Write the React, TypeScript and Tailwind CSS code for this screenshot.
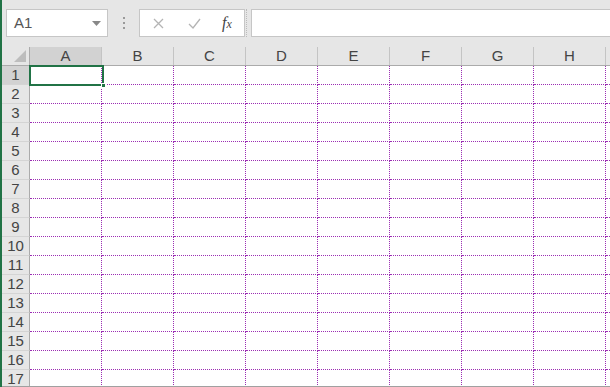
const cols = ["A", "B", "C", "D", "E", "F", "G", "H"];
const rows = Array.from({ length: 18 }, (_, i) => i + 1);

export default function App() {
  return (
    <div className="h-[387px] w-[610px] overflow-hidden flex flex-col bg-white border-l-2 border-[#217346] font-['Liberation_Sans',sans-serif]">
      {/* formula bar */}
      <div className="h-[47px] shrink-0 bg-[#e6e6e6] flex items-start pt-[9px] pl-[4px]">
        <div className="w-[102px] h-[28px] bg-white border border-[#c6c6c6] flex items-center pl-[7px] pr-[6px]">
          <span className="text-[15px] text-[#555] flex-1">A1</span>
          <svg width="9" height="5" viewBox="0 0 9 5">
            <path d="M0 0h9L4.5 5z" fill="#888" />
          </svg>
        </div>
        <div className="w-[31px] h-[28px] flex flex-col items-center justify-center gap-[3px]">
          <span className="w-[2px] h-[2px] bg-[#999]" />
          <span className="w-[2px] h-[2px] bg-[#999]" />
          <span className="w-[2px] h-[2px] bg-[#999]" />
        </div>
        <div className="w-[106px] h-[28px] bg-white border border-[#c6c6c6] flex items-center">
          <svg className="ml-[13px]" width="11" height="11" viewBox="0 0 11 11">
            <path d="M1 1l9 9M10 1l-9 9" stroke="#b4b4b4" strokeWidth="1.3" />
          </svg>
          <svg className="ml-[24px]" width="13" height="11" viewBox="0 0 13 11">
            <path d="M1 6l4 4L12 1" stroke="#b4b4b4" strokeWidth="1.3" fill="none" />
          </svg>
          <span className="ml-[21px] text-[16px] italic text-[#444] font-['Liberation_Serif',serif] leading-none">
            f<span className="text-[12px]">x</span>
          </span>
        </div>
        <div className="w-[2px] h-[28px] ml-[1px] flex gap-[1px]">
          <span className="w-px h-full border-l border-dotted border-[#bbb]" />
        </div>
        <div className="flex-1 h-[28px] ml-[3px] bg-white border border-[#c6c6c6] border-r-0" />
      </div>

      {/* grid */}
      <div className="relative flex-1 overflow-hidden">
        <div className="flex h-[19px] bg-[#e6e6e6] border-b border-[#ababab]">
          <div className="w-[28px] shrink-0 relative border-r border-[#ababab]">
            <svg className="absolute right-[3px] bottom-[3px]" width="12" height="12" viewBox="0 0 12 12">
              <path d="M12 0v12H0z" fill="#bdbdbd" />
            </svg>
          </div>
          {cols.map((c, i) => (
            <div
              key={c}
              className={`w-[72px] shrink-0 flex items-center justify-center text-[15px] text-[#444] border-r border-[#c4c4c4] ${i === 0 ? "bg-[#d2d2d2]" : ""}`}
            >
              {c}
            </div>
          ))}
          <div className="flex-1" />
        </div>
        {rows.map((r) => (
          <div key={r} className="flex h-[19px]">
            <div
              className={`w-[28px] shrink-0 flex items-center justify-center text-[15px] text-[#444] border-r border-b border-r-[#ababab] border-b-[#d4d4d4] ${r === 1 ? "bg-[#d2d2d2]" : "bg-[#e6e6e6]"}`}
            >
              {r}
            </div>
            {cols.map((c) => (
              <div key={c} className="w-[72px] shrink-0 border-r border-b border-dotted border-[#9b2db3]" />
            ))}
            <div className="flex-1 border-b border-dotted border-[#9b2db3]" />
          </div>
        ))}
        {/* active cell */}
        <div className="absolute left-[27px] top-[18px] w-[75px] h-[21px] border-2 border-[#217346]" />
        <div className="absolute left-[99px] top-[36px] w-[5px] h-[5px] bg-[#217346] border border-white" />
      </div>
      <div className="h-px shrink-0 bg-[#a0a0a0]" />
    </div>
  );
}
